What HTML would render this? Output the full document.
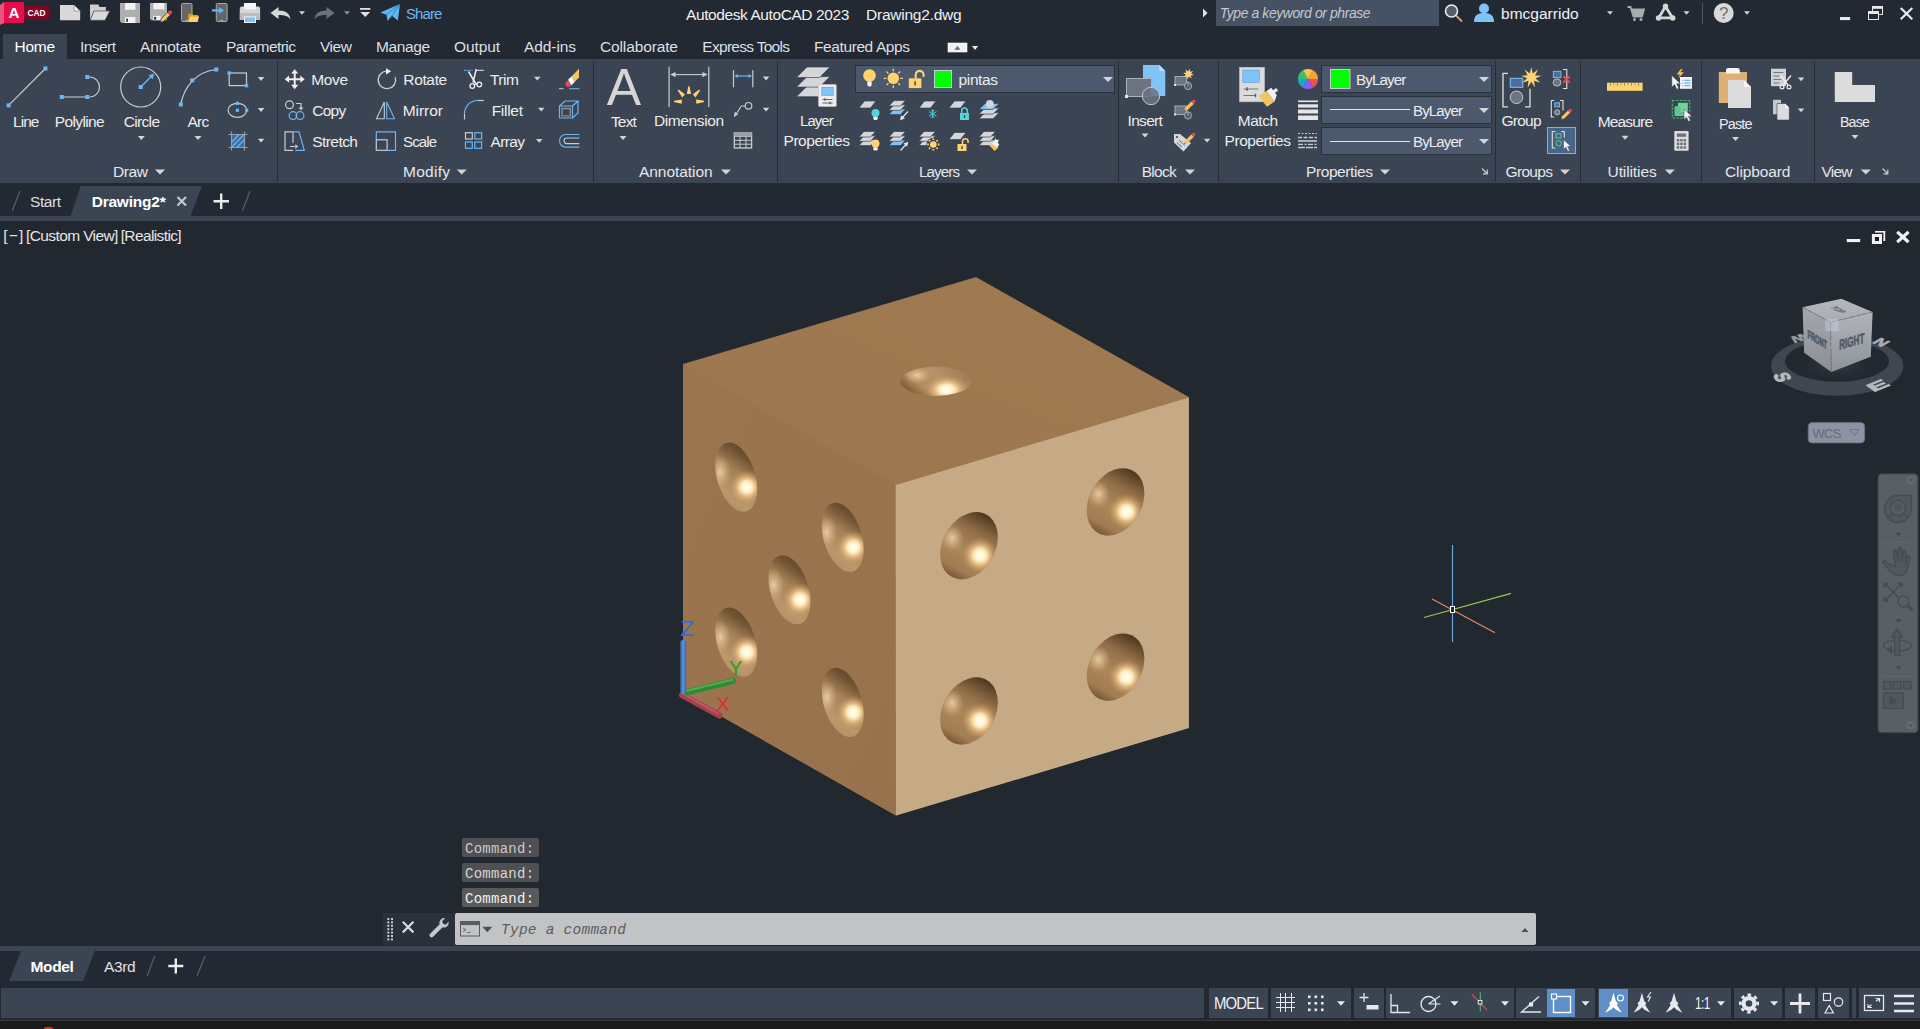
<!DOCTYPE html>
<html lang="en"><head><meta charset="utf-8"><title>Autodesk AutoCAD 2023 - Drawing2.dwg</title>
<style>
html,body{margin:0;padding:0;background:#222933;}
body{width:1920px;height:1029px;position:relative;overflow:hidden;font-family:"Liberation Sans",sans-serif;}
.b{position:absolute;}
.t{position:absolute;white-space:nowrap;}
svg{position:absolute;left:0;top:0;overflow:visible;}
</style></head><body>

<div class="b" style="left:0px;top:0px;width:1920px;height:34px;background:#222933;"></div>
<div class="b" style="left:3px;top:34px;width:64px;height:25px;background:#3b4453;"></div>
<div class="b" style="left:0px;top:59px;width:1920px;height:124px;background:#3b4453;"></div>
<div class="b" style="left:0px;top:216px;width:1920px;height:5px;background:#3b4453;"></div>
<div class="b" style="left:0px;top:221px;width:1920px;height:725px;background:#212830;"></div>
<div class="b" style="left:0px;top:946px;width:1920px;height:5px;background:#3b4453;"></div>
<div class="b" style="left:0px;top:988px;width:1920px;height:32px;background:#222933;"></div>
<div class="b" style="left:0px;top:1020px;width:1920px;height:1px;background:#3a3a3a;"></div>
<div class="b" style="left:0px;top:1021px;width:1920px;height:8px;background:#1b1b1b;"></div>
<div class="b" style="left:44px;top:1027px;width:9px;height:4px;background:#d93025;border-radius:3px;"></div>
<div class="b" style="left:1216px;top:0px;width:223px;height:26px;background:#475164;"></div>
<div class="b" style="left:277px;top:61px;width:1px;height:121px;background:#252c37;"></div>
<div class="b" style="left:593px;top:61px;width:1px;height:121px;background:#252c37;"></div>
<div class="b" style="left:777px;top:61px;width:1px;height:121px;background:#252c37;"></div>
<div class="b" style="left:1118px;top:61px;width:1px;height:121px;background:#252c37;"></div>
<div class="b" style="left:1218px;top:61px;width:1px;height:121px;background:#252c37;"></div>
<div class="b" style="left:1495px;top:61px;width:1px;height:121px;background:#252c37;"></div>
<div class="b" style="left:1580px;top:61px;width:1px;height:121px;background:#252c37;"></div>
<div class="b" style="left:1701px;top:61px;width:1px;height:121px;background:#252c37;"></div>
<div class="b" style="left:1814px;top:61px;width:1px;height:121px;background:#252c37;"></div>
<div class="b" style="left:855px;top:65px;width:260px;height:28px;background:#4c586c;box-sizing:border-box;border:1px solid #2a313e;"></div>
<div class="b" style="left:1321px;top:65px;width:171px;height:28px;background:#4c586c;box-sizing:border-box;border:1px solid #2a313e;"></div>
<div class="b" style="left:1321px;top:96px;width:171px;height:28px;background:#4c586c;box-sizing:border-box;border:1px solid #2a313e;"></div>
<div class="b" style="left:1321px;top:127px;width:171px;height:28px;background:#4c586c;box-sizing:border-box;border:1px solid #2a313e;"></div>
<div class="b" style="left:1547px;top:127px;width:29px;height:27px;background:#47648a;box-sizing:border-box;border:1px solid #6ab7f5;"></div>
<div class="b" style="left:1px;top:988px;width:1203px;height:30px;background:#3b4453;"></div>
<div class="b" style="left:1209px;top:988px;width:59px;height:30px;background:#3b4453;"></div>
<div class="b" style="left:1271px;top:988px;width:80px;height:30px;background:#3b4453;"></div>
<div class="b" style="left:1354px;top:988px;width:30px;height:30px;background:#3b4453;"></div>
<div class="b" style="left:1386px;top:988px;width:128px;height:30px;background:#3b4453;"></div>
<div class="b" style="left:1516px;top:988px;width:79px;height:30px;background:#3b4453;"></div>
<div class="b" style="left:1598px;top:988px;width:133px;height:30px;background:#3b4453;"></div>
<div class="b" style="left:1734px;top:988px;width:48px;height:30px;background:#3b4453;"></div>
<div class="b" style="left:1785px;top:988px;width:30px;height:30px;background:#3b4453;"></div>
<div class="b" style="left:1818px;top:988px;width:31px;height:30px;background:#3b4453;"></div>
<div class="b" style="left:1852px;top:988px;width:4px;height:30px;background:#3b4453;"></div>
<div class="b" style="left:1859px;top:988px;width:61px;height:30px;background:#3b4453;"></div>
<div class="b" style="left:1547px;top:989px;width:28px;height:28px;background:#5e8fc6;"></div>
<div class="b" style="left:1599px;top:989px;width:29px;height:28px;background:#5e8fc6;"></div>
<div class="b" style="left:383px;top:913px;width:72px;height:32px;background:#2a313d;"></div>
<div class="b" style="left:455px;top:913px;width:1081px;height:32px;background:#c2c3c5;border-radius:2px;"></div>
<div class="b" style="left:462px;top:838px;width:77px;height:19px;background:#4e5053;border-radius:2px;"></div>
<div class="b" style="left:462px;top:863px;width:77px;height:19px;background:#4e5053;border-radius:2px;"></div>
<div class="b" style="left:462px;top:888px;width:77px;height:19px;background:#58595b;border-radius:2px;"></div>
<svg width="1920" height="1029" viewBox="0 0 1920 1029" font-family="'Liberation Sans',sans-serif">
<defs>
<linearGradient id="gTop" x1="0" y1="1" x2="1" y2="0"><stop offset="0" stop-color="#9c764e"/><stop offset="1" stop-color="#a07a51"/></linearGradient>
<linearGradient id="gLeft" x1="0" y1="0" x2="1" y2="1"><stop offset="0" stop-color="#9b754e"/><stop offset="1" stop-color="#98724c"/></linearGradient>
<linearGradient id="gL" x1="0.75" y1="0" x2="0.3" y2="1"><stop offset="0" stop-color="#573d22"/><stop offset="0.22" stop-color="#6f5231"/><stop offset="0.45" stop-color="#a58157"/><stop offset="0.75" stop-color="#bb976c"/><stop offset="1" stop-color="#b18c61"/></linearGradient>
<linearGradient id="gR" x1="0.78" y1="0" x2="0.3" y2="1"><stop offset="0" stop-color="#3a2815"/><stop offset="0.14" stop-color="#664a2b"/><stop offset="0.33" stop-color="#93704a"/><stop offset="0.6" stop-color="#ad875b"/><stop offset="0.85" stop-color="#a27c52"/><stop offset="1" stop-color="#6f5130"/></linearGradient>
<linearGradient id="gT" x1="0" y1="0.75" x2="1" y2="0.25"><stop offset="0" stop-color="#6e4f2c"/><stop offset="0.12" stop-color="#86643d"/><stop offset="0.3" stop-color="#b48e61"/><stop offset="0.6" stop-color="#b8926a"/><stop offset="0.85" stop-color="#a68158"/><stop offset="1" stop-color="#9a7650"/></linearGradient>
<radialGradient id="hl"><stop offset="0" stop-color="#fffce8"/><stop offset="0.2" stop-color="#fffbe2"/><stop offset="0.38" stop-color="#ffe9b8" stop-opacity="0.95"/><stop offset="0.62" stop-color="#f0c285" stop-opacity="0.6"/><stop offset="1" stop-color="#c99b62" stop-opacity="0"/></radialGradient>
<radialGradient id="bl"><stop offset="0" stop-color="#ecceA6" stop-opacity="0.95"/><stop offset="0.5" stop-color="#dbb98d" stop-opacity="0.55"/><stop offset="1" stop-color="#c9a477" stop-opacity="0"/></radialGradient>
<linearGradient id="zax" x1="0" x2="1"><stop offset="0" stop-color="#3a66a8"/><stop offset="0.5" stop-color="#5d92da"/><stop offset="1" stop-color="#3a66a8"/></linearGradient>
<linearGradient id="cubeT" x1="0" y1="0" x2="0" y2="1"><stop offset="0" stop-color="#b4b8be"/><stop offset="1" stop-color="#a9adb3"/></linearGradient>
<linearGradient id="cubeF" x1="0" y1="0" x2="0" y2="1"><stop offset="0" stop-color="#a4a8ae"/><stop offset="1" stop-color="#8b8f96"/></linearGradient>
<linearGradient id="cubeR" x1="0" y1="0" x2="0" y2="1"><stop offset="0" stop-color="#b0b4ba"/><stop offset="1" stop-color="#8f939a"/></linearGradient>
<radialGradient id="cubeSh"><stop offset="0" stop-color="#3a4048" stop-opacity="0.9"/><stop offset="1" stop-color="#212830" stop-opacity="0"/></radialGradient>

<clipPath id="cL0"><circle cx="0.25" cy="0.25" r="0.0985" transform="matrix(213 120.5 0 330 683 364.5)"/></clipPath>
<clipPath id="cL1"><circle cx="0.75" cy="0.25" r="0.0985" transform="matrix(213 120.5 0 330 683 364.5)"/></clipPath>
<clipPath id="cL2"><circle cx="0.5" cy="0.5" r="0.0985" transform="matrix(213 120.5 0 330 683 364.5)"/></clipPath>
<clipPath id="cL3"><circle cx="0.25" cy="0.75" r="0.0985" transform="matrix(213 120.5 0 330 683 364.5)"/></clipPath>
<clipPath id="cL4"><circle cx="0.75" cy="0.75" r="0.0985" transform="matrix(213 120.5 0 330 683 364.5)"/></clipPath>
<clipPath id="cR0"><circle cx="0.25" cy="0.25" r="0.0985" transform="matrix(293.1 -87.6 0 330.5 895.7 485)"/></clipPath>
<clipPath id="cR1"><circle cx="0.75" cy="0.25" r="0.0985" transform="matrix(293.1 -87.6 0 330.5 895.7 485)"/></clipPath>
<clipPath id="cR2"><circle cx="0.25" cy="0.75" r="0.0985" transform="matrix(293.1 -87.6 0 330.5 895.7 485)"/></clipPath>
<clipPath id="cR3"><circle cx="0.75" cy="0.75" r="0.0985" transform="matrix(293.1 -87.6 0 330.5 895.7 485)"/></clipPath>
<clipPath id="cT0"><circle cx="0.5" cy="0.5" r="0.0985" transform="matrix(293 -87 212.8 120.5 683 364.5)"/></clipPath>
</defs>
<polygon points="683,364.5 976,277.5 1188.8,397.5 1188.8,728 896,815.5 683,694.5" fill="#9b754e"/>
<polygon points="683,364.5 976,277.5 1188.8,397.5 895.7,485" fill="url(#gTop)" stroke="#9c764e" stroke-width="0.8"/>
<polygon points="683,364.5 895.7,485 896,815.5 683,694.5" fill="url(#gLeft)"/>
<polygon points="895.7,485 1188.8,397.5 1188.8,728 896,815.5" fill="#c6a985"/>
<g clip-path="url(#cL0)">
<rect x="712.2" y="440.1" width="48" height="74" fill="url(#gL)"/>
<ellipse cx="720.2" cy="472.1" rx="11" ry="17" fill="url(#bl)"/>
<circle cx="746.8" cy="487.1" r="17" fill="url(#hl)"/>
</g>
<g clip-path="url(#cL1)">
<rect x="818.8" y="500.4" width="48" height="74" fill="url(#gL)"/>
<ellipse cx="826.8" cy="532.4" rx="11" ry="17" fill="url(#bl)"/>
<circle cx="853.2" cy="547.4" r="17" fill="url(#hl)"/>
</g>
<g clip-path="url(#cL2)">
<rect x="765.5" y="552.8" width="48" height="74" fill="url(#gL)"/>
<ellipse cx="773.5" cy="584.8" rx="11" ry="17" fill="url(#bl)"/>
<circle cx="800.0" cy="599.8" r="17" fill="url(#hl)"/>
</g>
<g clip-path="url(#cL3)">
<rect x="712.2" y="605.1" width="48" height="74" fill="url(#gL)"/>
<ellipse cx="720.2" cy="637.1" rx="11" ry="17" fill="url(#bl)"/>
<circle cx="746.8" cy="652.1" r="17" fill="url(#hl)"/>
</g>
<g clip-path="url(#cL4)">
<rect x="818.8" y="665.4" width="48" height="74" fill="url(#gL)"/>
<ellipse cx="826.8" cy="697.4" rx="11" ry="17" fill="url(#bl)"/>
<circle cx="853.2" cy="712.4" r="17" fill="url(#hl)"/>
</g>
<g clip-path="url(#cR0)">
<rect x="938.0" y="509.7" width="62" height="72" fill="url(#gR)"/>
<ellipse cx="952.0" cy="537.7" rx="12" ry="14" fill="url(#bl)"/>
<circle cx="980.0" cy="555.4" r="18" fill="url(#hl)"/>
</g>
<g clip-path="url(#cR1)">
<rect x="1084.5" y="465.9" width="62" height="72" fill="url(#gR)"/>
<ellipse cx="1098.5" cy="493.9" rx="12" ry="14" fill="url(#bl)"/>
<circle cx="1126.5" cy="511.6" r="18" fill="url(#hl)"/>
</g>
<g clip-path="url(#cR2)">
<rect x="938.0" y="675.0" width="62" height="72" fill="url(#gR)"/>
<ellipse cx="952.0" cy="703.0" rx="12" ry="14" fill="url(#bl)"/>
<circle cx="980.0" cy="720.7" r="18" fill="url(#hl)"/>
</g>
<g clip-path="url(#cR3)">
<rect x="1084.5" y="631.2" width="62" height="72" fill="url(#gR)"/>
<ellipse cx="1098.5" cy="659.2" rx="12" ry="14" fill="url(#bl)"/>
<circle cx="1126.5" cy="676.9" r="18" fill="url(#hl)"/>
</g>
<g clip-path="url(#cT0)">
<rect x="897.9" y="365.2" width="76" height="32" fill="url(#gT)"/>
<ellipse cx="917.4" cy="375.2" rx="14" ry="9" fill="url(#bl)"/>
<ellipse cx="946.7" cy="389.6" rx="22" ry="14" fill="url(#hl)"/>
</g>
<line x1="682" y1="695" x2="719.5" y2="715.5" stroke="#a8404c" stroke-width="6" stroke-linecap="round"/>
<line x1="682.5" y1="693.5" x2="719" y2="714" stroke="#c25a64" stroke-width="2"/>
<line x1="686" y1="692.5" x2="733" y2="681" stroke="#2f8a36" stroke-width="6" stroke-linecap="round"/>
<line x1="686" y1="691" x2="733" y2="679.5" stroke="#4fae52" stroke-width="2"/>
<rect x="680.3" y="640" width="6" height="54" rx="2.5" fill="url(#zax)"/>
<text x="680.5" y="636" font-size="22.5" fill="#2f6fd8">Z</text>
<text x="729" y="674.5" font-size="20" fill="#21a121">Y</text>
<text x="716" y="710.5" font-size="21" fill="#d63232">X</text>
<line x1="1452.5" y1="545" x2="1452.5" y2="642" stroke="#66a3e0" stroke-width="1.2"/>
<line x1="1424" y1="617.5" x2="1511" y2="593.3" stroke="#93c94d" stroke-width="1.2"/>
<line x1="1432" y1="599" x2="1495" y2="632.7" stroke="#e08a68" stroke-width="1.2"/>
<rect x="1450.5" y="606.5" width="4" height="6" fill="#212830" stroke="#ffffff" stroke-width="1"/>
<rect x="1846.8" y="239" width="13.4" height="3.1" fill="#f2f2f2"/>
<rect x="1875" y="231" width="10.2" height="1.6" fill="#f2f2f2"/><rect x="1883.4" y="231" width="1.8" height="10" fill="#f2f2f2"/>
<rect x="1873.4" y="235.500" width="7.100" height="7" fill="#1b2028" stroke="#f2f2f2" stroke-width="3"/>
<path d="M1898.400 233 L1907.300 241 M1907.300 233 L1898.400 241" stroke="#f2f2f2" stroke-width="3.3" stroke-linecap="square"/>
<path fill-rule="evenodd" fill="#414750" d="M1771 366 a66.2 29.8 0 1 0 132.4 0 a66.2 29.8 0 1 0 -132.4 0 Z M1785 361.2 a52 20.5 0 1 0 104 0 a52 20.5 0 1 0 -104 0 Z"/>
<text transform="matrix(0.594 0.787 -1.334 0.35 1772.6 374.9)" font-size="15" font-weight="bold" fill="#b7babf" stroke="#b7babf" stroke-width="0.9">S</text>
<text transform="matrix(1.73 -0.70 0.84 0.61 1873.6 392.2)" font-size="15" font-weight="bold" fill="#b7babf" stroke="#b7babf" stroke-width="0.8">E</text>
<text transform="matrix(0.98 0.426 -0.853 0.49 1871.6 342.6)" font-size="15" font-weight="bold" fill="#a9acb2" stroke="#a9acb2" stroke-width="0.8">N</text>
<text transform="matrix(-1.02 0.313 -0.627 -0.51 1803 333.2)" font-size="15" font-weight="bold" fill="#9a9da3" stroke="#9a9da3" stroke-width="0.6">W</text>
<ellipse cx="1836" cy="366" rx="44" ry="16" fill="url(#cubeSh)"/>
<polygon points="1802.6,307.2 1841.3,298.8 1872.6,312 1830.6,322.3" fill="url(#cubeT)"/>
<polygon points="1802.6,307.2 1830.6,322.3 1831.4,371.9 1804.1,352.7" fill="url(#cubeF)"/>
<polygon points="1830.6,322.3 1872.6,312 1870.8,356.7 1831.4,371.9" fill="url(#cubeR)"/>
<path d="M1802.6 307.2 L1830.6 322.3 L1872.6 312 M1830.6 322.3 L1831.4 371.9" fill="none" stroke="#6e737b" stroke-width="0.8" stroke-dasharray="5 1.5"/>
<rect x="1825.3" y="319" width="13.5" height="12.5" rx="2.5" fill="#bfc6d8" opacity="0.55"/>
<text transform="matrix(0.51 0.307 0 1.05 1807.6 337.7)" font-size="11" font-weight="bold" fill="#535b67" stroke="#535b67" stroke-width="0.9">FRONT</text>
<text transform="matrix(0.62 -0.174 0 1.07 1839.3 349.7)" font-size="13" font-weight="bold" fill="#535b67" stroke="#535b67" stroke-width="0.7">RIGHT</text>
<text transform="matrix(0.66 0.35 -1.14 0.25 1829.5 307.6)" font-size="8" font-weight="bold" fill="#666e79" stroke="#666e79" stroke-width="0.4">TOP</text>
<rect x="1808.2" y="422.6" width="56.5" height="20.3" rx="4" fill="#8e92a4" stroke="#6b6f80" stroke-width="0.8"/>
<text x="1812.5" y="437.5" font-size="13" fill="#666b7a" textLength="29">WCS</text>
<path d="M1850 429.5 h9 l-4.5 6 z" fill="none" stroke="#6f7484" stroke-width="1"/>
<rect x="1878" y="473.8" width="40" height="259" rx="3.5" fill="#5a5f66" stroke="#3b4048" stroke-width="1"/>
<circle cx="1911" cy="480" r="4.3" fill="#666b72"/><path d="M1909 478 l4 4 m0 -4 l-4 4" stroke="#50555c" stroke-width="1.1"/>
<circle cx="1910.7" cy="725.2" r="4.3" fill="#666b72"/><path d="M1908 724.3 h5.4 l-2.7 3 z" fill="#50555c"/>
<g fill="#52575e" stroke="#474c54" stroke-width="1.4">
<path d="M1884.5 509 a13.500 13.500 0 0 1 13.500 -13.500 h13.500 v13.500 a13.500 13.500 0 0 1 -27 0 z"/><circle cx="1898" cy="508" r="7.500" fill="#5a5f66"/><circle cx="1898" cy="507" r="4.500" stroke="none" fill="#50555c"/><path d="M1892.500 513.200 l-3.800 4.300 M1903.500 513.200 l3.800 4.300" fill="none"/>
<path transform="translate(0.5 1.8)" d="M1888 562 c-3 -3 -5 -4 -5.500 -2.500 c-0.500 2 5 7 9 12 c4 3 12 3 14 -1 c2 -4 3 -10 4 -15 c0 -2 -2.500 -2 -3 0 l-1.500 6 l0.500 -11 c0 -2 -3 -2 -3 0 l-1 9 l-0.500 -12 c0 -2 -3 -2 -3 0 l0 12 l-2 -10 c-0.500 -2 -3 -1.500 -3 0.500 l2 15 z"/>
<path d="M1884.500 583.500 l17 17 M1902 583.500 l-17.500 17.500" fill="none" stroke-width="1.600"/><path d="M1883.500 588.500 v-6 h6 z M1897 582.500 h6 v6 z M1883.500 596 v6 h6 z" stroke="none" fill="#474c54"/><circle cx="1903.500" cy="601.500" r="5.500" fill="#5a5f66"/><path d="M1907.500 605.500 l5 5" stroke-width="3"/>
<ellipse cx="1897.500" cy="645.600" rx="14" ry="5.500" fill="none"/><path d="M1894.700 655.500 v-18.500 h-3 l5.500 -8 l5.500 8 h-3 v18.500 z"/><path d="M1892 645 l-5.500 4.500 l5.500 4.500 z" stroke="none" fill="#474c54"/>
<rect x="1883.500" y="681.500" width="7.500" height="7.500"/><rect x="1893.400" y="681.500" width="7.500" height="7.500"/><rect x="1903.400" y="681.500" width="7.500" height="7.500"/><rect x="1883.500" y="693" width="19.800" height="15.500"/>
</g>
<path d="M1881 542.300 h34 M1881 676.500 h34" stroke="#666b72" stroke-width="0.8"/>
<g fill="#474c54"><path d="M1895 532.500 h7 l-3.500 4 z"/><path d="M1895 619 h7 l-3.500 4 z"/><path d="M1895 666 h7 l-3.500 4 z"/><path d="M1889.500 696 v10 l8 -5 z"/></g>
</svg>
<svg width="1920" height="1029" viewBox="0 0 1920 1029" font-family="'Liberation Sans',sans-serif">
<polygon points="0,5 4,2 4,23 0,25" fill="#e8557f"/>
<rect x="4" y="2" width="20" height="21" fill="#e50e4d"/>
<rect x="24" y="5" width="25" height="15" fill="#7e0625"/>
<text x="8.6" y="18" font-size="15.2" font-weight="bold" fill="#fff">A</text>
<text x="27.4" y="16.1" font-size="9.6" font-weight="bold" fill="#fff" textLength="18" lengthAdjust="spacingAndGlyphs">CAD</text>
<path d="M60 5 h14 l6.200 6 v9.200 h-20.200 z" fill="#d9d9d9"/><path d="M74 5 v6 h6.200 z" fill="#f6f6f6" stroke="#70747a" stroke-width="0.6"/>
<path d="M90 20.200 v-15.800 h8.300 l1.300 2.600 h6.300 v4 h-12 z" fill="#cfcfcf"/><path d="M90.200 20.300 l3.800 -9.300 h15.800 l-4.800 9.300 z" fill="#d9d9d9" stroke="#4b5059" stroke-width="0.7"/>
<path d="M120 3 h20 v20 h-18.200 l-1.800 -1.800 z" fill="#aeaeae"/><rect x="125" y="3" width="10.400" height="6.800" fill="#f2f2f2"/><rect x="125" y="17" width="10.400" height="6" fill="#f2f2f2"/><rect x="126.200" y="18.600" width="1.700" height="3.300" fill="#2c313a"/>
<path d="M150 3 h17 v17.200 h-15.500 l-1.500 -1.500 z" fill="#aeaeae"/><rect x="153.400" y="3" width="11" height="6.300" fill="#f2f2f2"/><rect x="153" y="15.900" width="7.600" height="4.300" fill="#f2f2f2"/><rect x="154" y="17" width="2.200" height="2.600" fill="#2c313a"/>
<path d="M160 22.600 l1.300 -4 l6.300 -6.300 l2.700 2.700 l-6.300 6.300 z" fill="#f2c76b" stroke="#222933" stroke-width="0.7"/><path d="M167.600 12.300 l1.200 -1.200 a1.900 1.900 0 0 1 2.700 2.700 l-1.200 1.200 z" fill="#e5484d"/><path d="M160 22.600 l0.600 -1.900 l1.300 1.300 z" fill="#555"/>
<rect x="181.500" y="3.500" width="10.500" height="18" rx="1" fill="#666666" stroke="#a9a9a9" stroke-width="1"/><rect x="185.500" y="19.800" width="2.500" height="0.900" fill="#c8c8c8"/>
<path d="M188.200 21.900 v-8.200 h4 l1.200 1.400 h4.800 v6.800 z" fill="#d99a2b"/><path d="M188.200 21.900 l2.200 -5.400 h8.800 l-2.200 5.400 z" fill="#ffd272"/>
<rect x="216.300" y="3.500" width="10.800" height="18" rx="1" fill="#666666" stroke="#a9a9a9" stroke-width="1"/><rect x="220.500" y="19.800" width="2.500" height="0.900" fill="#c8c8c8"/>
<path d="M212 9.300 h7.200 v-2.300 l4.800 3.400 l-4.800 3.400 v-2.300 h-7.200 z" fill="#5bb6f5"/>
<path d="M239.800 8.600 a2 2 0 0 1 2 -2 h16.300 a2 2 0 0 1 2 2 v11.100 h-20.300 z" fill="#d6d6d6"/><rect x="239.800" y="13" width="20.300" height="6.700" fill="#bdbdbd"/><rect x="244" y="3" width="12" height="6.300" fill="#f6f6f6"/><rect x="244.500" y="16.900" width="11" height="5.600" fill="#7fc3f7" stroke="#f2f2f2" stroke-width="1"/>
<path d="M270.5 13 l8 -6 v3.6 c7 0 11.5 3 12 9 c-2.5 -3.6 -6 -4.6 -12 -4.6 v4 z" fill="#d4d6d9"/>
<path d="M334.5 13 l-8 -6 v3.6 c-7 0 -11.5 3 -12 9 c2.5 -3.6 6 -4.6 12 -4.6 v4 z" fill="#6b707a"/>
<path d="M299.0 11.2 h6 l-3.0 3.6 z" fill="#d2d4d8"/>
<path d="M344.0 11.2 h6 l-3.0 3.6 z" fill="#8d929b"/>
<rect x="360" y="8" width="10.4" height="1.8" fill="#e0e0e0"/>
<path d="M360.2 11.9 h10 l-5.0 5 z" fill="#e0e0e0"/>
<path d="M380.3 12.400 L400 4 L397.800 20.500 L392 15.800 L387.600 21 L386.500 14.800 z" fill="#5cb7f5"/><path d="M400 4 L386.500 14.800 M400 4 L392 15.800 L387.600 21" fill="none" stroke="#2b6ea8" stroke-width="0.7"/>
<path d="M1203 8.5 l4.6 4.5 l-4.6 4.5 z" fill="#e0e0e0"/>
<path d="M1456 15.5 l6 6" stroke="#d9a56e" stroke-width="1.800"/><circle cx="1451.5" cy="11" r="6" fill="#575d68" stroke="#ececec" stroke-width="1.600"/>
<circle cx="1484" cy="8.5" r="5" fill="#7fc4f7"/><path d="M1474 22 c0 -7 4 -9 10 -9 s10 2 10 9 z" fill="#7fc4f7"/>
<path d="M1607.0 11.2 h6 l-3.0 3.6 z" fill="#d2d4d8"/>
<path d="M1627.5 7 h3 l3 9.5 h8.5 l2 -7 h-12" fill="none" stroke="#a9abaf" stroke-width="1.8"/><path d="M1632 9.5 h12 l-2 6.5 h-8 z" fill="#a9abaf"/><circle cx="1634.5" cy="19.5" r="1.5" fill="#a9abaf"/><circle cx="1641" cy="19.5" r="1.5" fill="#a9abaf"/>
<path d="M1665.5 6.500 L1658.8 17.800 h13.700 z" fill="none" stroke="#d6d6d6" stroke-width="2.8" stroke-linejoin="round"/><circle cx="1665.5" cy="6.300" r="2.700" fill="#d6d6d6"/><circle cx="1658.500" cy="18" r="2.700" fill="#d6d6d6"/><circle cx="1672.800" cy="18" r="2.700" fill="#d6d6d6"/>
<path d="M1683.5 11.2 h6 l-3.0 3.6 z" fill="#d2d4d8"/>
<rect x="1702" y="3" width="1" height="21" fill="#4b5361"/>
<circle cx="1723.7" cy="13" r="10" fill="#d9d9d9"/><text x="1719" y="19" font-size="17" fill="#6b6e73">?</text>
<path d="M1744.0 11.2 h6 l-3.0 3.6 z" fill="#d2d4d8"/>
<rect x="1840" y="17" width="10.100" height="3.100" fill="#e8e8e8"/>
<rect x="1872.500" y="6.500" width="10" height="8" fill="none" stroke="#e8e8e8" stroke-width="1"/><rect x="1872" y="6" width="11" height="2.800" fill="#e8e8e8"/>
<rect x="1868.500" y="11.500" width="10" height="8" fill="#222933" stroke="#e8e8e8" stroke-width="1"/><rect x="1868" y="11" width="11" height="3" fill="#e8e8e8"/>
<path d="M1900.700 7.900 L1912.300 19.300 M1912.300 7.900 L1900.700 19.300" stroke="#ececec" stroke-width="2.100"/>
<rect x="948" y="43" width="19" height="9" fill="#f2f2f2" stroke="#ffffff" stroke-width="0.6"/><path d="M954.4 49.700 l3 -3.700 l3 3.700 z" fill="#6a6a6a"/>
<path d="M971.9 46.0 h6.2 l-3.1 4 z" fill="#e8e8e8"/>
<polygon points="80.7,186 202,186 190.5,216 70.5,216" fill="#3b4453"/>
<path d="M20 191 L12.200 211 M250 191 L242.300 211" stroke="#56606f" stroke-width="1.2"/>
<path d="M177.5 197 l8.5 8.5 m0 -8.5 l-8.5 8.5" stroke="#c4c7cc" stroke-width="2.2"/>
<path d="M213.5 201.3 h15.5 M221.2 193.5 v15.5" stroke="#ececec" stroke-width="2.4"/>
<polygon points="21.2,950.5 95,950.5 83.1,981 9.1,981" fill="#3b4453"/>
<path d="M154.700 956 L147.300 975.700 M205.100 956 L197.100 975.700" stroke="#56606f" stroke-width="1.2"/>
<path d="M168.3 966 h15 M175.8 958.5 v15" stroke="#ececec" stroke-width="2.4"/>
<rect x="387.3" y="918.0" width="2" height="2" fill="#c8cbd0"/><rect x="391" y="918.0" width="2" height="2" fill="#c8cbd0"/>
<rect x="387.3" y="921.4" width="2" height="2" fill="#c8cbd0"/><rect x="391" y="921.4" width="2" height="2" fill="#c8cbd0"/>
<rect x="387.3" y="924.8" width="2" height="2" fill="#c8cbd0"/><rect x="391" y="924.8" width="2" height="2" fill="#c8cbd0"/>
<rect x="387.3" y="928.2" width="2" height="2" fill="#c8cbd0"/><rect x="391" y="928.2" width="2" height="2" fill="#c8cbd0"/>
<rect x="387.3" y="931.6" width="2" height="2" fill="#c8cbd0"/><rect x="391" y="931.6" width="2" height="2" fill="#c8cbd0"/>
<rect x="387.3" y="935.0" width="2" height="2" fill="#c8cbd0"/><rect x="391" y="935.0" width="2" height="2" fill="#c8cbd0"/>
<rect x="387.3" y="938.4" width="2" height="2" fill="#c8cbd0"/><rect x="391" y="938.4" width="2" height="2" fill="#c8cbd0"/>
<path d="M402.8 921.8 l10.6 10.6 m0 -10.6 l-10.6 10.6" stroke="#d6d8dc" stroke-width="2.2"/>
<path transform="translate(-1.4 -2.7)" d="M431.5 936.5 l9.5 -9.5 a4.6 4.6 0 0 1 5.5 -6 l-3 3 l1 2.5 l2.5 1 l3 -3 a4.6 4.6 0 0 1 -6 5.5 l-9.5 9.5 a2.1 2.1 0 0 1 -3 -3 z" fill="#c4c7cc"/>
<rect x="460.5" y="921.5" width="19" height="14.5" fill="#c2c3c5" stroke="#5a5c60" stroke-width="1"/><rect x="460.5" y="921.5" width="19" height="3.6" fill="#5a5c60"/><path d="M463 928 l3 1.8 l-3 1.8 M467 932.6 h3.5" fill="none" stroke="#5a5c60" stroke-width="0.9"/>
<path d="M482.3 926.8 h10 l-5.0 5.4 z" fill="#4d4f54"/>
<path d="M1521.5 932 h7 l-3.5 -4 z" fill="#4d4f54"/>
<path d="M1276 997.5 h19 M1276 1002.5 h19 M1276 1007.5 h19 M1280.5 993 v19 M1285.5 993 v19 M1291.5 993 v19" stroke="#e6e8eb" stroke-width="1" fill="none"/>
<rect x="1308.0" y="995.5" width="2.6" height="2.6" fill="#e6e8eb"/>
<rect x="1308.0" y="1002.0" width="2.6" height="2.6" fill="#e6e8eb"/>
<rect x="1308.0" y="1008.5" width="2.6" height="2.6" fill="#e6e8eb"/>
<rect x="1314.5" y="995.5" width="2.6" height="2.6" fill="#e6e8eb"/>
<rect x="1314.5" y="1002.0" width="2.6" height="2.6" fill="#e6e8eb"/>
<rect x="1314.5" y="1008.5" width="2.6" height="2.6" fill="#e6e8eb"/>
<rect x="1321.0" y="995.5" width="2.6" height="2.6" fill="#e6e8eb"/>
<rect x="1321.0" y="1002.0" width="2.6" height="2.6" fill="#e6e8eb"/>
<rect x="1321.0" y="1008.5" width="2.6" height="2.6" fill="#e6e8eb"/>
<path d="M1337.0 1001.2 h8 l-4.0 4.5 z" fill="#e6e8eb"/>
<path d="M1359.5 997.5 h9 M1364 993 v9" stroke="#e6e8eb" stroke-width="1.3"/><rect x="1366.5" y="1005" width="12" height="4.5" fill="#e6e8eb"/>
<path d="M1391 994 v18.5 h19 M1391 1005.5 h6.5 v7" stroke="#e6e8eb" stroke-width="1.3" fill="none"/>
<circle cx="1428.5" cy="1004" r="7.5" fill="none" stroke="#e6e8eb" stroke-width="1.3"/><path d="M1428.5 1004 L1440 996 M1428.5 1004 h12" stroke="#e6e8eb" stroke-width="1.2" fill="none"/>
<path d="M1450.5 1001.2 h8 l-4.0 4.5 z" fill="#e6e8eb"/>
<path d="M1472 994.5 L1487 1010.2" stroke="#e5484d" stroke-width="1.1"/><path d="M1480.3 992.5 v18.7" stroke="#4fbf58" stroke-width="1.1"/><rect x="1478.3" y="1000.5" width="3.6" height="3.6" fill="#3b4453" stroke="#e6e8eb" stroke-width="1"/>
<path d="M1501.0 1001.2 h8 l-4.0 4.5 z" fill="#e6e8eb"/>
<path d="M1541 1012 h-19.5 L1539 996.5" stroke="#e6e8eb" stroke-width="1.3" fill="none"/><rect x="1529" y="1002.5" width="4" height="4" fill="#e6e8eb"/>
<rect x="1553.5" y="996.5" width="17" height="16" fill="none" stroke="#fff" stroke-width="1.4"/><rect x="1551.5" y="994" width="5" height="5" fill="#5b8fce" stroke="#fff" stroke-width="1.1"/>
<path d="M1581.5 1001.2 h8 l-4.0 4.5 z" fill="#e6e8eb"/>
<path d="M1613.5 992.8 L1615.8 1001 L1617.9 1003.3 L1616.8 1005 L1621.8 1012.7 L1616.1 1009.8 L1613.5 1007.2 L1610.9 1009.8 L1605.2 1012.7 L1610.2 1005 L1609.1 1003.3 L1611.2 1001 z" fill="#fff"/>
<circle cx="1620.5" cy="998" r="3" fill="none" stroke="#fff" stroke-width="1.1"/>
<path d="M1641.9 992.8 L1644.2 1001 L1646.3000000000002 1003.3 L1645.2 1005 L1650.2 1012.7 L1644.5 1009.8 L1641.9 1007.2 L1639.3000000000002 1009.8 L1633.6000000000001 1012.7 L1638.6000000000001 1005 L1637.5 1003.3 L1639.6000000000001 1001 z" fill="#e6e8eb"/>
<path d="M1651 992 l-3.5 5 h3 l-2.5 4.5" stroke="#e6e8eb" stroke-width="1.1" fill="none"/>
<path d="M1674.0 992.8 L1676.3 1001 L1678.4 1003.3 L1677.3 1005 L1682.3 1012.7 L1676.6 1009.8 L1674.0 1007.2 L1671.4 1009.8 L1665.7 1012.7 L1670.7 1005 L1669.6 1003.3 L1671.7 1001 z" fill="#e6e8eb"/>
<path d="M1717.0 1001.2 h8 l-4.0 4.5 z" fill="#e6e8eb"/>
<circle cx="1749" cy="1003.5" r="5.4" fill="none" stroke="#e6e8eb" stroke-width="4.2"/><circle cx="1749" cy="1003.5" r="8.7" fill="none" stroke="#e6e8eb" stroke-width="2.8" stroke-dasharray="3.4 3.433" transform="rotate(-11 1749 1003.5)"/>
<path d="M1770.2 1001.2 h8 l-4.0 4.5 z" fill="#e6e8eb"/>
<path d="M1790 1003.5 h20 M1800 993.5 v20" stroke="#e6e8eb" stroke-width="2.8"/>
<rect x="1823.5" y="993.5" width="7" height="7" fill="none" stroke="#e6e8eb" stroke-width="1.2"/><circle cx="1838.5" cy="1002" r="4.2" fill="none" stroke="#e6e8eb" stroke-width="1.2"/><path d="M1825 1013 l4.2 -7.5 l4.2 7.5 z" fill="none" stroke="#e6e8eb" stroke-width="1.2"/>
<rect x="1864.5" y="995.5" width="19" height="15" fill="none" stroke="#e6e8eb" stroke-width="1.3"/><path d="M1868 1007.5 l3.5 -2.700 M1876 1001.200 l3.500 -2.700 M1875.5 998.5 h4 v3.5 M1868 1004 v3.5 h4" fill="none" stroke="#e6e8eb" stroke-width="1.2"/>
<path d="M1894 996 h20 M1894 1003.5 h20 M1894 1011 h20" stroke="#e6e8eb" stroke-width="2.6"/>
<path d="M8.6 105.4 L45.4 68.5" stroke="#c9ccd1" stroke-width="1.2"/><rect x="6.6" y="103.4" width="4" height="4" fill="#6ab7f5"/><rect x="43.4" y="66.5" width="4" height="4" fill="#6ab7f5"/>
<path d="M61.8 97 H87.3 M89.5 97 a10 10 0 0 0 0 -20" stroke="#c9ccd1" stroke-width="1.2" fill="none"/><rect x="59.8" y="95.0" width="4" height="4" fill="#6ab7f5"/><rect x="85.3" y="95.0" width="4" height="4" fill="#6ab7f5"/><rect x="85.3" y="75.0" width="4" height="4" fill="#6ab7f5"/>
<circle cx="140.7" cy="87" r="20" fill="none" stroke="#c9ccd1" stroke-width="1.2"/><path d="M140.7 87 L151.5 76.2" stroke="#6ab7f5" stroke-width="1.3"/><path d="M154.2 73.6 l-5.6 1.6 l4 4 z" fill="#6ab7f5"/><rect x="138.7" y="85.0" width="4" height="4" fill="#6ab7f5"/>
<path d="M180.8 104.5 C184 86 197 71.5 216.3 69.5" stroke="#c9ccd1" stroke-width="1.2" fill="none"/><rect x="178.8" y="102.5" width="4" height="4" fill="#6ab7f5"/><rect x="190.2" y="78.4" width="4" height="4" fill="#6ab7f5"/><rect x="214.3" y="67.5" width="4" height="4" fill="#6ab7f5"/>
<path d="M137.8 136.0 h7 l-3.5 4 z" fill="#d2d4d8"/><path d="M194.5 136.0 h7 l-3.5 4 z" fill="#d2d4d8"/>
<rect x="229.2" y="73" width="17.3" height="12.6" fill="none" stroke="#c9ccd1" stroke-width="1.2"/><rect x="227.5" y="71.3" width="3.4" height="3.4" fill="#6ab7f5"/><rect x="244.8" y="83.9" width="3.4" height="3.4" fill="#6ab7f5"/><path d="M257.8 77.1 h6.5 l-3.2 3.8 z" fill="#d2d4d8"/>
<ellipse cx="237.4" cy="110.3" rx="9.3" ry="7" fill="none" stroke="#c9ccd1" stroke-width="1.2"/><rect x="235.8" y="101.7" width="3.2" height="3.2" fill="#6ab7f5"/><rect x="245.1" y="108.7" width="3.2" height="3.2" fill="#6ab7f5"/><rect x="235.8" y="108.7" width="3.2" height="3.2" fill="#6ab7f5"/><path d="M257.8 108.1 h6.5 l-3.2 3.8 z" fill="#d2d4d8"/>
<rect x="231.5" y="134.5" width="13" height="13" fill="#3c6ea5"/><path d="M232 142 l7 -7.5 M232 147 l12 -12.5 M237 147.5 l7.5 -8" stroke="#6ab7f5" stroke-width="1.1"/><path d="M228.5 134.5 h19 M228.5 147.5 h19 M231.5 131.5 v19 M244.5 131.5 v19" stroke="#9a9ea6" stroke-width="1.1"/><path d="M257.8 138.8 h6.5 l-3.2 3.8 z" fill="#d2d4d8"/>
<path d="M155.0 169.5 h10 l-5.0 5 z" fill="#d2d4d8"/>
<path d="M294.7 69.2 l3.6 4.4 h-2.6 v4.6 h4.6 v-2.6 l4.4 3.6 l-4.4 3.6 v-2.6 h-4.6 v4.6 h2.6 l-3.6 4.4 l-3.6 -4.4 h2.6 v-4.6 h-4.6 v2.6 l-4.4 -3.6 l4.4 -3.6 v2.6 h4.6 v-4.6 h-2.600 z" fill="#f0f0f0"/>
<circle cx="289.5" cy="104.7" r="3.9" fill="none" stroke="#c9ccd1" stroke-width="1.2"/><path d="M296 103.5 h5 v5" fill="none" stroke="#c9ccd1" stroke-width="1.2"/><path d="M298.6 107.5 h4.8 l-2.4 3 z" fill="#c9ccd1"/><circle cx="293" cy="115.6" r="3.9" fill="none" stroke="#6ab7f5" stroke-width="1.2"/><circle cx="300" cy="115.6" r="3.9" fill="none" stroke="#6ab7f5" stroke-width="1.2"/>
<path d="M293 131.8 h-8 v18.5 h8" fill="none" stroke="#c9ccd1" stroke-width="1.2"/><path d="M293 131.8 v11" stroke="#c9ccd1" stroke-width="1.2"/><path d="M293 131.8 h6 l5.300 18.5 h-9" fill="none" stroke="#6ab7f5" stroke-width="1.2"/><path d="M290 146.500 h5.500" stroke="#c9ccd1" stroke-width="1.1"/><path d="M295.300 144.300 l3 2.200 l-3 2.200 z" fill="#c9ccd1"/>
<path d="M387.5 71.2 a8.7 8.7 0 1 0 7.700 6" fill="none" stroke="#c9ccd1" stroke-width="1.3"/><path d="M386 68.200 l5.200 3 l-5.200 3.200 z" fill="#f0f0f0"/>
<path d="M384.300 102 v16.800 h-7.800 z" fill="none" stroke="#c9ccd1" stroke-width="1.1"/><path d="M386.700 102 v16.800 h7.800 z" fill="none" stroke="#6ab7f5" stroke-width="1.1"/>
<path d="M376.300 139.500 v-7.700 h19.200 v18.500 h-8" fill="none" stroke="#6ab7f5" stroke-width="1.200"/><rect x="376.300" y="139.800" width="10.800" height="10.500" fill="none" stroke="#c9ccd1" stroke-width="1.200"/>
<path d="M464 70.400 h8.500" stroke="#6ab7f5" stroke-width="1.200" stroke-dasharray="1.5 1"/><path d="M475.500 70.400 h8.300" stroke="#c9ccd1" stroke-width="1.200"/><path d="M468.500 71.500 l8 13.500 M476.300 69 l-3.300 13.500" stroke="#f0f0f0" stroke-width="1.500"/><circle cx="472.300" cy="86" r="2.300" fill="none" stroke="#f0f0f0" stroke-width="1.300"/><circle cx="479.300" cy="84.500" r="2.300" fill="none" stroke="#f0f0f0" stroke-width="1.300"/>
<path d="M464.500 119.500 v-6" stroke="#c9ccd1" stroke-width="1.200"/><path d="M464.500 113.500 a13 13 0 0 1 13 -13" fill="none" stroke="#6ab7f5" stroke-width="1.200"/><path d="M477.500 100.500 h6.300" stroke="#c9ccd1" stroke-width="1.200"/>
<rect x="465.5" y="132.7" width="6.800" height="6.300" fill="none" stroke="#c9ccd1" stroke-width="1.200"/>
<rect x="474.8" y="132.7" width="6.800" height="6.300" fill="none" stroke="#6ab7f5" stroke-width="1.200"/>
<rect x="465.5" y="142" width="6.800" height="6.300" fill="none" stroke="#6ab7f5" stroke-width="1.200"/>
<rect x="474.8" y="142" width="6.800" height="6.300" fill="none" stroke="#6ab7f5" stroke-width="1.200"/>
<path d="M534.0 76.8 h6.5 l-3.2 3.8 z" fill="#d2d4d8"/><path d="M538.0 107.8 h6.5 l-3.2 3.8 z" fill="#d2d4d8"/><path d="M536.0 138.9 h6.5 l-3.2 3.8 z" fill="#d2d4d8"/>
<path d="M572 76 l7 -7.300 v8.500 l-4.500 5 z" fill="#f3c562"/><path d="M568 79.800 l4 -3.800 l2.500 6.200 l-3.300 3.300 z" fill="#f6f6f6"/><path d="M566 82.500 a2.800 2.800 0 0 0 4.500 3.300 l0.700 -0.800 l-3.500 -4.500 z" fill="#ef4b55"/><path d="M559 88.700 h4.500" stroke="#c9ccd1" stroke-width="1"/><path d="M569 88.700 h10.300" stroke="#6ab7f5" stroke-width="1"/>
<path d="M559.500 106 h13 v12 h-13 z M559.500 106 l5.500 -5 h13 l-5.500 5 M578 101 v12 l-5.500 5" fill="none" stroke="#6ab7f5" stroke-width="1.200"/><path d="M562 108.500 h8.300 v7.300 h-8.300 z" fill="none" stroke="#8c9098" stroke-width="1.300"/>
<path d="M579.300 134.500 h-13.500 a6.300 6.300 0 0 0 0 12.600 h13.500" fill="none" stroke="#6ab7f5" stroke-width="1.200"/><path d="M579.300 138 h-12.500 a2.800 2.800 0 0 0 0 5.600 h12.500" fill="none" stroke="#c9ccd1" stroke-width="1.200"/>
<path d="M456.7 169.5 h10 l-5.0 5 z" fill="#d2d4d8"/>
<path d="M619.5 136.0 h7 l-3.5 4 z" fill="#d2d4d8"/>
<path d="M669.100 66.800 v40.300 M708.800 66.800 v40.300" stroke="#c9ccd1" stroke-width="1.200"/><path d="M673.500 74.600 h31" stroke="#c9ccd1" stroke-width="1.100"/><path d="M670.300 74.600 l5.200 -2.700 v5.400 z M707.600 74.600 l-5.200 -2.700 v5.400 z" fill="#c9ccd1"/>
<g fill="#ffd272"><path d="M688.300 86.300 h1.200 l1.500 7.700 h-4.200 z"/><path d="M677.600 90.300 l1 -0.700 l6.300 4.600 l-2.600 3.300 z"/><path d="M700.200 90.300 l-1 -0.700 l-6.300 4.600 l2.600 3.300 z"/><path d="M674 100.700 v1.300 l7.700 1.700 l0.200 -4.200 z"/><path d="M704 100.700 v1.300 l-7.700 1.700 l-0.200 -4.200 z"/></g>
<path d="M733.500 70.300 v17 M752.800 70.300 v17" stroke="#c9ccd1" stroke-width="1.200"/><path d="M736.500 76 h13.500" stroke="#6ab7f5" stroke-width="1.200"/><path d="M734.300 76 l3.500 -1.900 v3.800 z M752 76 l-3.500 -1.900 v3.800 z" fill="#6ab7f5"/><path d="M762.8 76.6 h6.5 l-3.2 3.8 z" fill="#d2d4d8"/>
<circle cx="748.500" cy="105.800" r="3.300" fill="none" stroke="#c9ccd1" stroke-width="1.200"/><path d="M745.300 106 h-4 l-5.300 8.500" fill="none" stroke="#c9ccd1" stroke-width="1.200"/><path d="M733.800 117.300 l1 -5.500 l3.500 2.500 z" fill="#c9ccd1"/><path d="M762.8 107.8 h6.5 l-3.2 3.8 z" fill="#d2d4d8"/>
<rect x="734.300" y="133" width="17.300" height="15" fill="none" stroke="#c9ccd1" stroke-width="1.300"/><path d="M734.300 136.500 h17.300 M734.300 140.300 h17.300 M734.300 144.200 h17.300 M740 136.500 v11.500 M746 136.500 v11.500" stroke="#c9ccd1" stroke-width="1"/><rect x="734.300" y="133" width="17.300" height="3.500" fill="#9a9ea6"/>
<path d="M721.0 169.5 h10 l-5.0 5 z" fill="#d2d4d8"/>
<path d="M807.0 86.2 h23 l-10.5 10.5 h-23 z" fill="#d4d6d9" stroke="#3b4453" stroke-width="0.7"/><path d="M807.0 76.6 h23 l-10.5 10.5 h-23 z" fill="#d4d6d9" stroke="#3b4453" stroke-width="0.7"/><path d="M807.0 67.0 h23 l-10.5 10.5 h-23 z" fill="#d4d6d9" stroke="#3b4453" stroke-width="0.7"/>
<rect x="818.5" y="84.500" width="17.800" height="22" rx="1" fill="#ececec" stroke="#c4c4c4" stroke-width="0.6"/><rect x="821.800" y="87.300" width="11.400" height="8" fill="#7fc3f7" stroke="#5a9bd0" stroke-width="0.6"/><path d="M822.500 99.500 h10 M822.500 103 h10" stroke="#555a63" stroke-width="0.9"/><path d="M825 98.300 v2.400 M830 101.800 v2.400" stroke="#555a63" stroke-width="1.300"/>
<circle cx="869.5" cy="75.5" r="6.3" fill="#ffd272"/><path d="M867.3 81.5 h4.4 v3.500 l-1 1.500 h-2.400 l-1 -1.500 z" fill="#f4f4f4"/>
<circle cx="893.3" cy="78.3" r="5.8" fill="#ffd272"/><path d="M900.3 78.3 L902.9 78.3 M898.2 83.2 L900.1 85.1 M893.3 85.3 L893.3 87.9 M888.4 83.2 L886.5 85.1 M886.3 78.3 L883.7 78.3 M888.4 73.4 L886.5 71.5 M893.3 71.3 L893.3 68.7 M898.2 73.4 L900.1 71.5 " stroke="#ffd272" stroke-width="1.3"/>
<rect x="908.8" y="78.3" width="12.6" height="9.799999999999999" fill="#ffd272"/><rect x="914.3999999999999" y="81.1" width="1.400" height="4.199999999999999" fill="#3b4453"/><path d="M915.7 78.3 v-3.5 a3.9199999999999995 3.9199999999999995 0 0 1 7.839999999999999 0 v2.0999999999999996" fill="none" stroke="#ffd272" stroke-width="2.0999999999999996"/>
<rect x="934.500" y="70.500" width="17" height="17" fill="#00ff00" stroke="#c9ccd1" stroke-width="1"/>
<path d="M1103.0 77.0 h10 l-5.0 5 z" fill="#d2d4d8"/>
<path d="M864.5 101.0 h11.5 l-5.5 7 h-11.5 z" fill="#d4d6d9" stroke="#3b4453" stroke-width="0.7"/><circle cx="875.5" cy="113.0" r="4" fill="#57d3dc"/><path d="M873.3 116.7 h4.4 v2 l-1 1.300 h-2.400 l-1 -1.300 z" fill="#f4f4f4"/>
<path d="M894.0 109.1 h11.5 l-5 5.5 h-11.5 z" fill="#7fc3f7" stroke="#3b4453" stroke-width="0.7"/><path d="M894.0 104.8 h11.5 l-5 5.5 h-11.5 z" fill="#d4d6d9" stroke="#3b4453" stroke-width="0.7"/><path d="M894.0 100.5 h11.5 l-5 5.5 h-11.5 z" fill="#d4d6d9" stroke="#3b4453" stroke-width="0.7"/><path d="M908 111.500 l-6.500 7" stroke="#e8e8e8" stroke-width="1.200"/><path d="M900 120.200 l1.200 -5 l3.600 3.400 z" fill="#e8e8e8"/>
<path d="M924.5 101.0 h11.5 l-5.5 7 h-11.5 z" fill="#d4d6d9" stroke="#3b4453" stroke-width="0.7"/><path d="M932.700 109.500 v8.600 M929 111.600 l7.400 4.400 M936.400 111.600 l-7.400 4.400 M931.200 110 l1.500 1.500 l1.500 -1.500 M931.200 117.600 l1.500 -1.500 l1.500 1.500" stroke="#57d3dc" stroke-width="1" fill="none"/>
<path d="M954.5 101.0 h11.5 l-5.5 7 h-11.5 z" fill="#d4d6d9" stroke="#3b4453" stroke-width="0.7"/><rect x="960" y="113" width="9.0" height="7.0" fill="#57d3dc"/><rect x="963.8" y="115.0" width="1.400" height="3.0" fill="#3b4453"/><path d="M961.7 113 v-2.2 a2.8 2.8 0 0 1 5.6 0 v2.2" fill="none" stroke="#57d3dc" stroke-width="1.5"/>
<path d="M985.0 112.7 h14 l-6 6 h-14 z" fill="#d4d6d9" stroke="#3b4453" stroke-width="0.7"/><path d="M985.0 108.1 h14 l-6 6 h-14 z" fill="#d4d6d9" stroke="#3b4453" stroke-width="0.7"/><path d="M985.0 103.5 h14 l-6 6 h-14 z" fill="#7fc3f7" stroke="#3b4453" stroke-width="0.7"/><circle cx="989.800" cy="104" r="3.900" fill="#d4d6d9"/>
<path d="M864.0 140.1 h11.5 l-5 5.5 h-11.5 z" fill="#d4d6d9" stroke="#3b4453" stroke-width="0.7"/><path d="M864.0 135.8 h11.5 l-5 5.5 h-11.5 z" fill="#d4d6d9" stroke="#3b4453" stroke-width="0.7"/><path d="M864.0 131.5 h11.5 l-5 5.5 h-11.5 z" fill="#d4d6d9" stroke="#3b4453" stroke-width="0.7"/><circle cx="875.5" cy="143.5" r="4" fill="#ffd272"/><path d="M873.3 147.2 h4.4 v2 l-1 1.300 h-2.400 l-1 -1.300 z" fill="#f4f4f4"/>
<path d="M894.0 140.1 h11.5 l-5 5.5 h-11.5 z" fill="#7fc3f7" stroke="#3b4453" stroke-width="0.7"/><path d="M894.0 135.8 h11.5 l-5 5.5 h-11.5 z" fill="#d4d6d9" stroke="#3b4453" stroke-width="0.7"/><path d="M894.0 131.5 h11.5 l-5 5.5 h-11.5 z" fill="#d4d6d9" stroke="#3b4453" stroke-width="0.7"/><path d="M900.500 150.500 l6.500 -7" stroke="#e8e8e8" stroke-width="1.200"/><path d="M908.300 141.800 l-1.200 5 l-3.600 -3.400 z" fill="#e8e8e8"/>
<path d="M924.0 140.1 h11.5 l-5 5.5 h-11.5 z" fill="#d4d6d9" stroke="#3b4453" stroke-width="0.7"/><path d="M924.0 135.8 h11.5 l-5 5.5 h-11.5 z" fill="#d4d6d9" stroke="#3b4453" stroke-width="0.7"/><path d="M924.0 131.5 h11.5 l-5 5.5 h-11.5 z" fill="#d4d6d9" stroke="#3b4453" stroke-width="0.7"/><circle cx="933.300" cy="144.500" r="6.800" fill="#3b4453"/><circle cx="933.3" cy="144.5" r="3.3" fill="#ffd272"/><path d="M937.8 144.5 L939.4 144.5 M936.5 147.7 L937.6 148.8 M933.3 149.0 L933.3 150.6 M930.1 147.7 L929.0 148.8 M928.8 144.5 L927.2 144.5 M930.1 141.3 L929.0 140.2 M933.3 140.0 L933.3 138.4 M936.5 141.3 L937.6 140.2 " stroke="#ffd272" stroke-width="1.8"/>
<path d="M954.5 132.5 h11.5 l-5.5 7 h-11.5 z" fill="#d4d6d9" stroke="#3b4453" stroke-width="0.7"/><rect x="957.5" y="144" width="9.0" height="7.0" fill="#ffd272"/><rect x="961.3" y="146.0" width="1.400" height="3.0" fill="#3b4453"/><path d="M962.5 144 v-2.5 a2.8 2.8 0 0 1 5.6 0 v1.5" fill="none" stroke="#ffd272" stroke-width="1.5"/>
<path d="M984.0 140.1 h11.5 l-5 5.5 h-11.5 z" fill="#d4d6d9" stroke="#3b4453" stroke-width="0.7"/><path d="M984.0 135.8 h11.5 l-5 5.5 h-11.5 z" fill="#d4d6d9" stroke="#3b4453" stroke-width="0.7"/><path d="M984.0 131.5 h11.5 l-5 5.5 h-11.5 z" fill="#d4d6d9" stroke="#3b4453" stroke-width="0.7"/><path d="M989.500 145.500 l4 -3.500 l5 5.500 l-4 3.500 z" fill="#f3c562"/><path d="M991.500 143.500 l2.500 -2.300 l1.500 -3 l1.300 2 l2.300 -0.800 l-1.300 3 l1.500 2.500 l-2.300 2.300 z" fill="#f0f0f0"/>
<path d="M967.0 169.5 h10 l-5.0 5 z" fill="#d2d4d8"/>
<path d="M1143 65 h16.300 l6 6 v25 h-22.300 z" fill="#7fc3f7"/><path d="M1159.300 65 v6 h6 z" fill="#bfe1fb"/>
<rect x="1126.500" y="78.500" width="25" height="18" fill="#6d7481" stroke="#aeb2b9" stroke-width="1"/><circle cx="1151" cy="96" r="8.700" fill="#6d7481" fill-opacity="0.85" stroke="#c4c7cc" stroke-width="1"/><rect x="1125" y="95" width="3" height="3" fill="#e6e6e6"/>
<path d="M1141.5 133.5 h7 l-3.5 4 z" fill="#d2d4d8"/>
<rect x="1175" y="76.5" width="11.500" height="8.500" fill="#6d7481" stroke="#aeb2b9" stroke-width="0.9"/><circle cx="1188" cy="86.0" r="3.600" fill="#59606d" stroke="#aeb2b9" stroke-width="0.9"/><rect x="1174" y="84.0" width="2" height="2" fill="#e6e6e6"/><path d="M1188 86.0 v-5" stroke="#aeb2b9" stroke-width="0.8"/><polygon points="1194.0,75.1 1190.7,75.5 1191.6,78.7 1189.0,76.6 1187.4,79.5 1187.0,76.2 1183.8,77.1 1185.9,74.5 1183.0,72.9 1186.3,72.5 1185.4,69.3 1188.0,71.4 1189.6,68.5 1190.0,71.8 1193.2,70.9 1191.1,73.5" fill="#ffd272"/>
<rect x="1175" y="106" width="11.500" height="8.500" fill="#6d7481" stroke="#aeb2b9" stroke-width="0.9"/><circle cx="1188" cy="115.5" r="3.600" fill="#59606d" stroke="#aeb2b9" stroke-width="0.9"/><rect x="1174" y="113.5" width="2" height="2" fill="#e6e6e6"/><path d="M1188 115.5 v-5" stroke="#aeb2b9" stroke-width="0.8"/><path d="M1184 111 l1.14 -3.3249999999999997 l6.175 -6.175 l2.375 2.375 l-6.175 6.175 z" fill="#f3c562"/><path d="M1191.315 101.5 l1.2349999999999999 -1.2349999999999999 a1.615 1.615 0 0 1 2.375 2.375 l-1.2349999999999999 1.2349999999999999 z" fill="#ef4b55"/><path d="M1184 111 l0.57 -1.615 l1.14 1.14 z" fill="#555"/>
<path d="M1174 134 h6 l11 9 l-7.500 8.500 l-9.500 -9 z" fill="#d4d6d9"/><circle cx="1177" cy="137" r="1.100" fill="#3b4453"/><path d="M1179 140 l6 5.500 M1177 142.500 l5 4.500" stroke="#555a63" stroke-width="0.8"/><path d="M1184 144 l1.14 -3.3249999999999997 l6.175 -6.175 l2.375 2.375 l-6.175 6.175 z" fill="#f3c562"/><path d="M1191.315 134.5 l1.2349999999999999 -1.2349999999999999 a1.615 1.615 0 0 1 2.375 2.375 l-1.2349999999999999 1.2349999999999999 z" fill="#ef4b55"/><path d="M1184 144 l0.57 -1.615 l1.14 1.14 z" fill="#555"/>
<path d="M1203.8 138.8 h6.5 l-3.2 3.8 z" fill="#d2d4d8"/>
<path d="M1185.0 169.5 h10 l-5.0 5 z" fill="#d2d4d8"/>
<rect x="1239.500" y="67.300" width="25" height="34.500" fill="#dcdcdc" stroke="#c2c2c2" stroke-width="0.6"/><rect x="1242.800" y="70" width="16.500" height="12.500" fill="#7fc3f7" stroke="#5a9bd0" stroke-width="0.600"/><path d="M1243.500 89 h15 M1243.500 95.500 h12" stroke="#555a63" stroke-width="0.800"/><path d="M1247 87.300 v3.400 M1255.500 93.800 v3.400" stroke="#555a63" stroke-width="1.400"/>
<path d="M1258.500 96 l8 -5 l8 10.500 l-7.500 5.300 z" fill="#f3c562"/><path d="M1266.500 91 l4.800 -3.200 l1.800 2.400 l3 -2.200 l2 2.600 l-3 2.200 l1.700 2.400 l-2.300 6.300 z" fill="#f2f2f2"/>
<path d="M1308 79 L1313.00 70.34 A10 10 0 0 1 1318.00 79.00 z" fill="#f2a33a"/>
<path d="M1308 79 L1318.00 79.00 A10 10 0 0 1 1313.00 87.66 z" fill="#e5554f"/>
<path d="M1308 79 L1313.00 87.66 A10 10 0 0 1 1303.00 87.66 z" fill="#8b5cf6"/>
<path d="M1308 79 L1303.00 87.66 A10 10 0 0 1 1298.00 79.00 z" fill="#1fa5c9"/>
<path d="M1308 79 L1298.00 79.00 A10 10 0 0 1 1303.00 70.34 z" fill="#3dbd73"/>
<path d="M1308 79 L1303.00 70.34 A10 10 0 0 1 1313.00 70.34 z" fill="#f6c445"/>
<rect x="1330.500" y="69.500" width="19.500" height="19" fill="#00ff00" stroke="#c9ccd1" stroke-width="1"/>
<path d="M1479.0 77.0 h10 l-5.0 5 z" fill="#d2d4d8"/><path d="M1479.0 108.0 h10 l-5.0 5 z" fill="#d2d4d8"/><path d="M1479.0 139.0 h10 l-5.0 5 z" fill="#d2d4d8"/>
<path d="M1330 109.500 h80 M1330 141.500 h80" stroke="#e6e6e6" stroke-width="1"/>
<rect x="1298" y="100.500" width="20" height="1.600" fill="#e6e6e6"/><rect x="1298" y="104.300" width="20" height="3.300" fill="#e6e6e6"/><rect x="1298" y="109.500" width="20" height="4" fill="#e6e6e6"/><rect x="1298" y="115.500" width="20" height="4.500" fill="#e6e6e6"/>
<path d="M1298 133.500 h19" stroke="#c9ccd1" stroke-width="1.200" stroke-dasharray="2 1.500"/><path d="M1298 137.500 h19" stroke="#c9ccd1" stroke-width="1.400" stroke-dasharray="4 1.500"/><path d="M1298 141 h19" stroke="#e6e6e6" stroke-width="1.300"/><path d="M1298 144.300 h19" stroke="#c9ccd1" stroke-width="1.300" stroke-dasharray="5 1.500 2 1.500"/><path d="M1298 147.500 h19" stroke="#c9ccd1" stroke-width="1.300" stroke-dasharray="7 1"/>
<path d="M1380.0 169.5 h10 l-5.0 5 z" fill="#d2d4d8"/>
<path d="M1482 168.500 l5 5 M1487.300 169.500 v4.300 h-4.300" fill="none" stroke="#c8cbd0" stroke-width="1.200"/>
<path d="M1508 73.300 h-5 v33.500 h5 M1525 106.800 h5 v-18" fill="none" stroke="#e0e0e0" stroke-width="1.300"/>
<rect x="1510.300" y="78.300" width="12.500" height="9" fill="#4a6f9a" stroke="#7fc3f7" stroke-width="1"/><circle cx="1516.500" cy="97.300" r="6.300" fill="#6d7481" stroke="#c4c7cc" stroke-width="1"/>
<polygon points="1531.3,67.0 1532.8,73.5 1538.1,69.5 1535.0,75.4 1541.6,75.7 1535.5,78.3 1540.4,82.8 1534.1,80.8 1534.9,87.4 1531.3,81.8 1527.7,87.4 1528.5,80.8 1522.2,82.7 1527.1,78.2 1521.0,75.7 1527.6,75.3 1524.6,69.5 1529.8,73.5" fill="#ffd272"/>
<rect x="1553.300" y="71.300" width="7.600" height="6.300" fill="#4a6f9a" stroke="#7fc3f7" stroke-width="0.900"/><ellipse cx="1557" cy="82.500" rx="3.900" ry="3.600" fill="#6d7481" stroke="#c4c7cc" stroke-width="0.900"/><path d="M1563 69.500 h3.800 v19 h-3.800" fill="none" stroke="#e0e0e0" stroke-width="1.100"/><path d="M1563.500 76.500 l6 6 m0 -6 l-6 6" stroke="#ef4b55" stroke-width="1.800"/>
<path d="M1554.300 100.500 h-3 v16.500 h3 M1560 100.500 h3 v10" fill="none" stroke="#e0e0e0" stroke-width="1.100"/><rect x="1554.800" y="102.800" width="4.800" height="4" fill="#4a6f9a" stroke="#7fc3f7" stroke-width="0.900"/><circle cx="1557.200" cy="112.300" r="2.600" fill="#6d7481" stroke="#c4c7cc" stroke-width="0.900"/><path d="M1561 119.5 l1.08 -3.15 l5.8500000000000005 -5.8500000000000005 l2.25 2.25 l-5.8500000000000005 5.8500000000000005 z" fill="#f3c562"/><path d="M1567.93 110.5 l1.1700000000000002 -1.1700000000000002 a1.53 1.53 0 0 1 2.25 2.25 l-1.1700000000000002 1.1700000000000002 z" fill="#ef4b55"/><path d="M1561 119.5 l0.54 -1.53 l1.08 1.08 z" fill="#555"/>
<path d="M1555.300 131.500 h-3 v16.500 h3 M1561.300 131.500 h3 v6" fill="none" stroke="#e0e0e0" stroke-width="1.100"/><rect x="1556" y="133.800" width="5" height="4" fill="none" stroke="#59d36b" stroke-width="1"/><circle cx="1558.700" cy="143.300" r="2.700" fill="none" stroke="#59d36b" stroke-width="1"/><path d="M1563.5 139.5 v9.9 l2.3400000000000003 -2.16 l1.9800000000000002 4.14 l1.8 -0.9 l-1.9800000000000002 -3.9600000000000004 h3.24 z" fill="#f4f4f4" stroke="#3b4453" stroke-width="0.5"/>
<path d="M1560.0 169.5 h10 l-5.0 5 z" fill="#d2d4d8"/>
<rect x="1607" y="82.700" width="35.600" height="8.100" fill="#ffd272"/><path d="M1610.500 83 v3 M1614 83 v2 M1617.500 83 v3 M1621 83 v2 M1624.500 83 v3 M1628 83 v2 M1631.500 83 v3 M1635 83 v2 M1638.500 83 v3" stroke="#3b4453" stroke-width="0.800" opacity="0.55"/>
<path d="M1621.5 135.7 h7 l-3.5 4 z" fill="#d2d4d8"/>
<rect x="1680" y="77" width="12" height="11.800" fill="#f2f2f2"/><path d="M1684.500 80.300 h6 M1684.500 83 h6 M1684.500 85.700 h6" stroke="#4da3ea" stroke-width="1"/><path d="M1682.300 80.300 h1 M1682.300 83 h1 M1682.300 85.700 h1" stroke="#4da3ea" stroke-width="1"/><path d="M1681 69 l-4.500 5.500 h3.300 l-1.500 4 l5.500 -6.300 h-3.300 l2 -3.200 z" fill="#f6c445"/><path d="M1671.8 75.5 v11.55 l2.7300000000000004 -2.52 l2.3100000000000005 4.83 l2.1 -1.05 l-2.3100000000000005 -4.620000000000001 h3.7800000000000002 z" fill="#f4f4f4" stroke="#3b4453" stroke-width="0.5"/>
<rect x="1672.300" y="100.500" width="17.500" height="17.500" fill="none" stroke="#3dbd73" stroke-width="1.100" stroke-dasharray="2.500 1.300"/><rect x="1678" y="102.800" width="9.800" height="9.800" fill="#74d39b"/><path d="M1674.500 106.300 h6 v6.300 h6.300 v3.300 h-12.300 z" fill="#5cc98a"/><path d="M1684 109 v10.45 l2.4699999999999998 -2.28 l2.09 4.369999999999999 l1.9 -0.95 l-2.09 -4.18 h3.42 z" fill="#f4f4f4" stroke="#3b4453" stroke-width="0.5"/>
<rect x="1674.300" y="131" width="14.300" height="19.800" rx="0.800" fill="#dcdcdc"/><rect x="1676.800" y="133.500" width="9.300" height="3.300" fill="#6b6f77"/>
<rect x="1676.8" y="139.0" width="2.500" height="2.500" fill="#6b6f77"/>
<rect x="1676.8" y="142.6" width="2.500" height="2.500" fill="#6b6f77"/>
<rect x="1676.8" y="146.2" width="2.500" height="2.500" fill="#6b6f77"/>
<rect x="1680.2" y="139.0" width="2.500" height="2.500" fill="#6b6f77"/>
<rect x="1680.2" y="142.6" width="2.500" height="2.500" fill="#6b6f77"/>
<rect x="1680.2" y="146.2" width="2.500" height="2.500" fill="#6b6f77"/>
<rect x="1683.6" y="139.0" width="2.500" height="2.500" fill="#6b6f77"/>
<rect x="1683.6" y="142.6" width="2.500" height="2.500" fill="#6b6f77"/>
<rect x="1683.6" y="146.2" width="2.500" height="2.500" fill="#6b6f77"/>
<path d="M1664.8 169.5 h10 l-5.0 5 z" fill="#d2d4d8"/>
<rect x="1718.800" y="72" width="28.200" height="31" fill="#deb074"/><path d="M1726 73.400 v-3 a2.400 2.400 0 0 1 2.400 -2.400 h9 a2.400 2.400 0 0 1 2.400 2.400 v3 z" fill="#f6f6f6"/><path d="M1728 80 h16 l7 7 v21 h-23 z" fill="#dcdcdc"/><path d="M1744 80 v7 h7 z" fill="#f6f6f6"/>
<path d="M1732.0 137.0 h7 l-3.5 4 z" fill="#d2d4d8"/>
<rect x="1771" y="68.700" width="15" height="17.500" fill="#cfd1d4"/><path d="M1773.500 72.500 h10 M1773.500 76 h8 M1773.500 79.500 h8 M1773.500 83 h6" stroke="#6b6f77" stroke-width="0.900"/><path d="M1780 75 l8 10 M1791 75.500 l-8 9.500" stroke="#f0f0f0" stroke-width="1.400"/><circle cx="1782" cy="87" r="1.900" fill="none" stroke="#f0f0f0" stroke-width="1.200"/><circle cx="1789" cy="87" r="1.900" fill="none" stroke="#f0f0f0" stroke-width="1.200"/><path d="M1797.8 77.5 h6.5 l-3.2 3.8 z" fill="#d2d4d8"/>
<path d="M1773 99.800 h8 v14.500 h-8 z" fill="#c4c7cc"/><path d="M1777 103.500 h8 l4.300 4.300 v12.200 h-12.300 z" fill="#dcdcdc" stroke="#3b4453" stroke-width="0.600"/><path d="M1785 103.500 v4.300 h4.300 z" fill="#f6f6f6"/><path d="M1797.8 108.5 h6.5 l-3.2 3.8 z" fill="#d2d4d8"/>
<path d="M1834.800 72 h17.400 v13.100 h22.800 v16.900 h-40.200 z" fill="#dcdcdc"/>
<path d="M1851.5 135.0 h7 l-3.5 4 z" fill="#d2d4d8"/>
<path d="M1860.8 169.5 h10 l-5.0 5 z" fill="#d2d4d8"/>
<path d="M1882.500 168.500 l5 5 M1887.800 169.500 v4.300 h-4.300" fill="none" stroke="#c8cbd0" stroke-width="1.200"/>
</svg>
<span class="t" style="left:406.3px;top:3.8px;font-size:15.5px;line-height:20px;color:#6bb8ee;letter-spacing:-0.90px;font-family:'Liberation Sans',sans-serif;transform:scaleX(0.964);transform-origin:0 0;">Share</span>
<span class="t" style="left:686.0px;top:4.6px;font-size:15.5px;line-height:20px;color:#f0f0f0;letter-spacing:-0.41px;font-family:'Liberation Sans',sans-serif;">Autodesk AutoCAD 2023</span>
<span class="t" style="left:866.0px;top:4.6px;font-size:15.5px;line-height:20px;color:#f0f0f0;letter-spacing:-0.23px;font-family:'Liberation Sans',sans-serif;">Drawing2.dwg</span>
<span class="t" style="left:1219.7px;top:3.6px;font-size:14px;line-height:18px;color:#c3c8d0;letter-spacing:-0.43px;font-family:'Liberation Sans',sans-serif;font-style:italic;">Type a keyword or phrase</span>
<span class="t" style="left:1501.0px;top:3.6px;font-size:15.5px;line-height:20px;color:#f0f0f0;letter-spacing:0.02px;font-family:'Liberation Sans',sans-serif;">bmcgarrido</span>
<span class="t" style="left:14.5px;top:36.6px;font-size:15.5px;line-height:20px;color:#ffffff;letter-spacing:-0.28px;font-family:'Liberation Sans',sans-serif;">Home</span>
<span class="t" style="left:80.0px;top:36.6px;font-size:15.5px;line-height:20px;color:#dcdfe4;letter-spacing:-0.55px;font-family:'Liberation Sans',sans-serif;">Insert</span>
<span class="t" style="left:140.0px;top:36.6px;font-size:15.5px;line-height:20px;color:#dcdfe4;letter-spacing:-0.15px;font-family:'Liberation Sans',sans-serif;">Annotate</span>
<span class="t" style="left:226.0px;top:36.6px;font-size:15.5px;line-height:20px;color:#dcdfe4;letter-spacing:-0.55px;font-family:'Liberation Sans',sans-serif;">Parametric</span>
<span class="t" style="left:320.0px;top:36.6px;font-size:15.5px;line-height:20px;color:#dcdfe4;letter-spacing:-0.44px;font-family:'Liberation Sans',sans-serif;">View</span>
<span class="t" style="left:376.0px;top:36.6px;font-size:15.5px;line-height:20px;color:#dcdfe4;letter-spacing:-0.40px;font-family:'Liberation Sans',sans-serif;">Manage</span>
<span class="t" style="left:454.0px;top:36.6px;font-size:15.5px;line-height:20px;color:#dcdfe4;letter-spacing:-0.11px;font-family:'Liberation Sans',sans-serif;">Output</span>
<span class="t" style="left:524.0px;top:36.6px;font-size:15.5px;line-height:20px;color:#dcdfe4;letter-spacing:-0.09px;font-family:'Liberation Sans',sans-serif;">Add-ins</span>
<span class="t" style="left:600.0px;top:36.6px;font-size:15.5px;line-height:20px;color:#dcdfe4;letter-spacing:-0.13px;font-family:'Liberation Sans',sans-serif;">Collaborate</span>
<span class="t" style="left:702.3px;top:36.6px;font-size:15.5px;line-height:20px;color:#dcdfe4;letter-spacing:-0.71px;font-family:'Liberation Sans',sans-serif;">Express Tools</span>
<span class="t" style="left:814.0px;top:36.6px;font-size:15.5px;line-height:20px;color:#dcdfe4;letter-spacing:-0.40px;font-family:'Liberation Sans',sans-serif;">Featured Apps</span>
<span class="t" style="left:13.4px;top:111.6px;font-size:15.5px;line-height:20px;color:#ececec;letter-spacing:-0.90px;font-family:'Liberation Sans',sans-serif;transform:scaleX(0.992);transform-origin:0 0;">Line</span>
<span class="t" style="left:54.7px;top:111.6px;font-size:15.5px;line-height:20px;color:#ececec;letter-spacing:-0.61px;font-family:'Liberation Sans',sans-serif;">Polyline</span>
<span class="t" style="left:123.7px;top:112.4px;font-size:15.5px;line-height:20px;color:#ececec;letter-spacing:-0.66px;font-family:'Liberation Sans',sans-serif;">Circle</span>
<span class="t" style="left:187.4px;top:112.4px;font-size:15.5px;line-height:20px;color:#ececec;letter-spacing:-0.68px;font-family:'Liberation Sans',sans-serif;">Arc</span>
<span class="t" style="left:610.9px;top:111.9px;font-size:15.5px;line-height:20px;color:#ececec;letter-spacing:-0.81px;font-family:'Liberation Sans',sans-serif;">Text</span>
<span class="t" style="left:654.0px;top:111.4px;font-size:15.5px;line-height:20px;color:#ececec;letter-spacing:-0.40px;font-family:'Liberation Sans',sans-serif;">Dimension</span>
<span class="t" style="left:799.5px;top:111.4px;font-size:15.5px;line-height:20px;color:#ececec;letter-spacing:-0.90px;font-family:'Liberation Sans',sans-serif;transform:scaleX(0.958);transform-origin:0 0;">Layer</span>
<span class="t" style="left:783.5px;top:131.1px;font-size:15.5px;line-height:20px;color:#ececec;letter-spacing:-0.46px;font-family:'Liberation Sans',sans-serif;">Properties</span>
<span class="t" style="left:1127.6px;top:110.6px;font-size:15.5px;line-height:20px;color:#ececec;letter-spacing:-0.71px;font-family:'Liberation Sans',sans-serif;">Insert</span>
<span class="t" style="left:1237.8px;top:111.4px;font-size:15.5px;line-height:20px;color:#ececec;letter-spacing:-0.50px;font-family:'Liberation Sans',sans-serif;">Match</span>
<span class="t" style="left:1224.6px;top:131.3px;font-size:15.5px;line-height:20px;color:#ececec;letter-spacing:-0.47px;font-family:'Liberation Sans',sans-serif;">Properties</span>
<span class="t" style="left:1501.5px;top:110.8px;font-size:15.5px;line-height:20px;color:#ececec;letter-spacing:-0.75px;font-family:'Liberation Sans',sans-serif;">Group</span>
<span class="t" style="left:1597.7px;top:112.4px;font-size:15.5px;line-height:20px;color:#ececec;letter-spacing:-0.83px;font-family:'Liberation Sans',sans-serif;">Measure</span>
<span class="t" style="left:1718.5px;top:113.6px;font-size:15.5px;line-height:20px;color:#ececec;letter-spacing:-0.90px;font-family:'Liberation Sans',sans-serif;transform:scaleX(0.930);transform-origin:0 0;">Paste</span>
<span class="t" style="left:1839.7px;top:112.4px;font-size:15.5px;line-height:20px;color:#ececec;letter-spacing:-0.90px;font-family:'Liberation Sans',sans-serif;transform:scaleX(0.913);transform-origin:0 0;">Base</span>
<span class="t" style="left:311.3px;top:69.6px;font-size:15.5px;line-height:20px;color:#ececec;letter-spacing:-0.40px;font-family:'Liberation Sans',sans-serif;">Move</span>
<span class="t" style="left:312.2px;top:100.6px;font-size:15.5px;line-height:20px;color:#ececec;letter-spacing:-0.70px;font-family:'Liberation Sans',sans-serif;">Copy</span>
<span class="t" style="left:312.2px;top:131.6px;font-size:15.5px;line-height:20px;color:#ececec;letter-spacing:-0.55px;font-family:'Liberation Sans',sans-serif;">Stretch</span>
<span class="t" style="left:403.3px;top:69.6px;font-size:15.5px;line-height:20px;color:#ececec;letter-spacing:-0.35px;font-family:'Liberation Sans',sans-serif;">Rotate</span>
<span class="t" style="left:402.7px;top:100.6px;font-size:15.5px;line-height:20px;color:#ececec;letter-spacing:-0.03px;font-family:'Liberation Sans',sans-serif;">Mirror</span>
<span class="t" style="left:402.7px;top:131.6px;font-size:15.5px;line-height:20px;color:#ececec;letter-spacing:-0.90px;font-family:'Liberation Sans',sans-serif;transform:scaleX(0.967);transform-origin:0 0;">Scale</span>
<span class="t" style="left:490.0px;top:69.6px;font-size:15.5px;line-height:20px;color:#ececec;letter-spacing:-0.54px;font-family:'Liberation Sans',sans-serif;">Trim</span>
<span class="t" style="left:491.7px;top:100.6px;font-size:15.5px;line-height:20px;color:#ececec;letter-spacing:-0.29px;font-family:'Liberation Sans',sans-serif;">Fillet</span>
<span class="t" style="left:490.5px;top:131.6px;font-size:15.5px;line-height:20px;color:#ececec;letter-spacing:-0.63px;font-family:'Liberation Sans',sans-serif;">Array</span>
<span class="t" style="left:958.6px;top:69.6px;font-size:15.5px;line-height:20px;color:#ececec;letter-spacing:-0.39px;font-family:'Liberation Sans',sans-serif;">pintas</span>
<span class="t" style="left:1355.6px;top:69.6px;font-size:15.5px;line-height:20px;color:#ececec;letter-spacing:-0.90px;font-family:'Liberation Sans',sans-serif;transform:scaleX(0.979);transform-origin:0 0;">ByLayer</span>
<span class="t" style="left:1412.6px;top:100.6px;font-size:15.5px;line-height:20px;color:#ececec;letter-spacing:-0.90px;font-family:'Liberation Sans',sans-serif;transform:scaleX(0.970);transform-origin:0 0;">ByLayer</span>
<span class="t" style="left:1412.6px;top:131.6px;font-size:15.5px;line-height:20px;color:#ececec;letter-spacing:-0.90px;font-family:'Liberation Sans',sans-serif;transform:scaleX(0.970);transform-origin:0 0;">ByLayer</span>
<span class="t" style="left:113.0px;top:161.8px;font-size:15.5px;line-height:20px;color:#e4e6ea;letter-spacing:-0.39px;font-family:'Liberation Sans',sans-serif;">Draw</span>
<span class="t" style="left:403.0px;top:161.8px;font-size:15.5px;line-height:20px;color:#e4e6ea;letter-spacing:0.27px;font-family:'Liberation Sans',sans-serif;">Modify</span>
<span class="t" style="left:639.0px;top:161.8px;font-size:15.5px;line-height:20px;color:#e4e6ea;letter-spacing:-0.05px;font-family:'Liberation Sans',sans-serif;">Annotation</span>
<span class="t" style="left:919.0px;top:161.8px;font-size:15.5px;line-height:20px;color:#e4e6ea;letter-spacing:-0.90px;font-family:'Liberation Sans',sans-serif;transform:scaleX(0.976);transform-origin:0 0;">Layers</span>
<span class="t" style="left:1141.7px;top:161.8px;font-size:15.5px;line-height:20px;color:#e4e6ea;letter-spacing:-0.73px;font-family:'Liberation Sans',sans-serif;">Block</span>
<span class="t" style="left:1306.0px;top:161.8px;font-size:15.5px;line-height:20px;color:#e4e6ea;letter-spacing:-0.41px;font-family:'Liberation Sans',sans-serif;">Properties</span>
<span class="t" style="left:1505.6px;top:161.8px;font-size:15.5px;line-height:20px;color:#e4e6ea;letter-spacing:-0.69px;font-family:'Liberation Sans',sans-serif;">Groups</span>
<span class="t" style="left:1607.6px;top:161.8px;font-size:15.5px;line-height:20px;color:#e4e6ea;letter-spacing:-0.11px;font-family:'Liberation Sans',sans-serif;">Utilities</span>
<span class="t" style="left:1725.0px;top:161.8px;font-size:15.5px;line-height:20px;color:#e4e6ea;letter-spacing:-0.11px;font-family:'Liberation Sans',sans-serif;">Clipboard</span>
<span class="t" style="left:1821.5px;top:161.8px;font-size:15.5px;line-height:20px;color:#e4e6ea;letter-spacing:-0.77px;font-family:'Liberation Sans',sans-serif;">View</span>
<span class="t" style="left:606.8px;top:53.7px;font-size:51.5px;line-height:67px;color:#d6d6d6;letter-spacing:0.00px;font-family:'Liberation Sans',sans-serif;">A</span>
<span class="t" style="left:30.0px;top:191.6px;font-size:15.5px;line-height:20px;color:#dcdfe4;letter-spacing:-0.43px;font-family:'Liberation Sans',sans-serif;">Start</span>
<span class="t" style="left:91.7px;top:191.6px;font-size:15.5px;line-height:20px;color:#ffffff;letter-spacing:-0.22px;font-family:'Liberation Sans',sans-serif;font-weight:bold;">Drawing2*</span>
<span class="t" style="left:3.3px;top:225.6px;font-size:15.5px;line-height:20px;color:#e6e6e6;letter-spacing:1.17px;font-family:'Liberation Sans',sans-serif;">[−]</span>
<span class="t" style="left:26.0px;top:225.6px;font-size:15.5px;line-height:20px;color:#e6e6e6;letter-spacing:-0.61px;font-family:'Liberation Sans',sans-serif;">[Custom View]</span>
<span class="t" style="left:120.7px;top:225.6px;font-size:15.5px;line-height:20px;color:#e6e6e6;letter-spacing:-0.62px;font-family:'Liberation Sans',sans-serif;">[Realistic]</span>
<span class="t" style="left:30.6px;top:956.6px;font-size:15.5px;line-height:20px;color:#ffffff;letter-spacing:-0.39px;font-family:'Liberation Sans',sans-serif;font-weight:bold;">Model</span>
<span class="t" style="left:104.0px;top:956.6px;font-size:15.5px;line-height:20px;color:#e0e2e6;letter-spacing:-0.41px;font-family:'Liberation Sans',sans-serif;">A3rd</span>
<span class="t" style="left:465.0px;top:840.3px;font-size:14px;line-height:18px;color:#c9c9c9;letter-spacing:0.26px;font-family:'Liberation Mono',monospace;">Command:</span>
<span class="t" style="left:465.0px;top:865.3px;font-size:14px;line-height:18px;color:#d6d6d6;letter-spacing:0.26px;font-family:'Liberation Mono',monospace;">Command:</span>
<span class="t" style="left:465.0px;top:890.3px;font-size:14px;line-height:18px;color:#f2f2f2;letter-spacing:0.26px;font-family:'Liberation Mono',monospace;">Command:</span>
<span class="t" style="left:501.0px;top:920.6px;font-size:14.5px;line-height:19px;color:#5c5c5c;letter-spacing:0.24px;font-family:'Liberation Mono',monospace;font-style:italic;">Type a command</span>
<span class="t" style="left:1214.0px;top:993.0px;font-size:16px;line-height:21px;color:#f0f0f0;letter-spacing:-0.90px;font-family:'Liberation Sans',sans-serif;transform:scaleX(0.932);transform-origin:0 0;">MODEL</span>
<span class="t" style="left:1695.2px;top:993.1px;font-size:16.5px;line-height:21px;color:#f0f0f0;letter-spacing:-0.90px;font-family:'Liberation Sans',sans-serif;transform:scaleX(0.724);transform-origin:0 0;">1:1</span>
</body></html>
